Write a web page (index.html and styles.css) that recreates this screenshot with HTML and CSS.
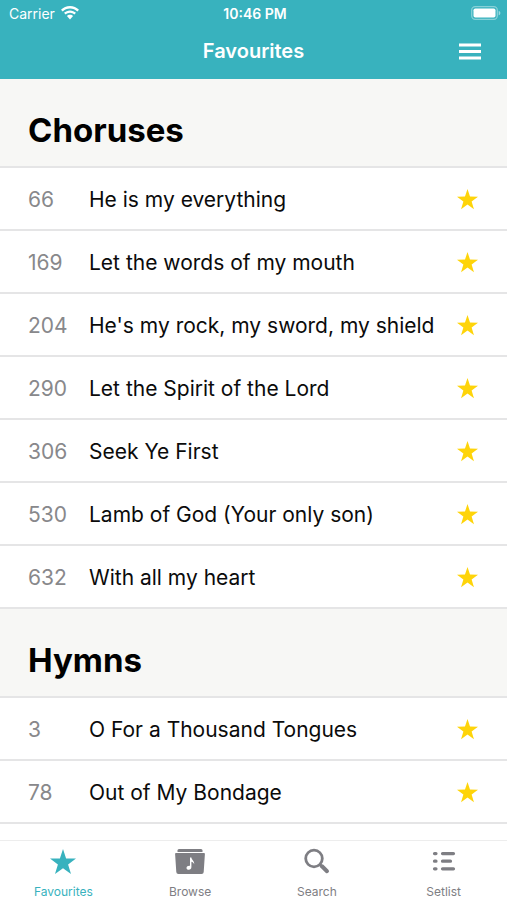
FILE: index.html
```html
<!DOCTYPE html>
<html lang="en">
<head>
<meta charset="utf-8">
<meta name="viewport" content="width=device-width, initial-scale=1">
<title>Favourites</title>
<link rel="stylesheet" href="styles.css">
</head>
<body>
<svg class="sprite" aria-hidden="true">
  <symbol id="star" viewBox="0 0 26 26">
    <path d="M13 0 16.1 9.4 26 9.5 18.1 15.4 21 25 13 19.3 5 25 7.9 15.4 0 9.5 9.9 9.4Z" fill="currentColor"/>
  </symbol>
</svg>
<div class="app">
  <header class="top">
    <div class="status">
      <div class="carrier">
        <span>Carrier</span>
        <svg class="wifi" viewBox="0 0 18 14" aria-hidden="true">
          <path d="M9 0C5.500 0 2.300 1.400 0 3.700L1.700 5.400C3.600 3.500 6.100 2.500 9 2.500S14.400 3.500 16.300 5.400L18 3.700C15.700 1.400 12.500 0 9 0Z"/>
          <path d="M9 4.400C6.700 4.400 4.600 5.300 3 6.800L4.700 8.500C5.800 7.400 7.300 6.700 9 6.700S12.200 7.400 13.300 8.500L15 6.800C13.400 5.300 11.300 4.400 9 4.400Z"/>
          <path d="M9 8.800C7.700 8.800 6.700 9.300 5.900 10L9 13.500 12.100 10C11.300 9.300 10.300 8.800 9 8.800Z"/>
        </svg>
      </div>
      <time class="clock">10:46 PM</time>
      <svg class="battery" viewBox="0 0 30 14" aria-hidden="true">
        <rect x=".7" y=".7" width="25.600" height="12.600" rx="3.500" fill="none" stroke="#fff" stroke-opacity=".4" stroke-width="1.300"/>
        <rect x="2.500" y="2.500" width="22" height="9" rx="1.800" fill="#fff"/>
        <path d="M27.700 4.700C29.900 5.600 29.900 8.400 27.700 9.300Z" fill="#fff" fill-opacity=".5"/>
      </svg>
    </div>
    <div class="nav">
      <h1 class="title">Favourites</h1>
      <button class="menu" type="button" aria-label="Menu">
        <svg viewBox="0 0 22 17" aria-hidden="true"><path d="M0 .5H22V3.500H0ZM0 7H22V10H0ZM0 13.500H22V16.500H0Z"/></svg>
      </button>
    </div>
  </header>
  <main class="content">
    <section>
      <h2 class="heading">Choruses</h2>
      <ul class="list">
        <li class="row"><span class="number">66</span><span class="name">He is my everything</span><button class="fav" type="button" aria-label="Remove favourite"><svg><use href="#star"/></svg></button></li>
        <li class="row"><span class="number">169</span><span class="name">Let the words of my mouth</span><button class="fav" type="button" aria-label="Remove favourite"><svg><use href="#star"/></svg></button></li>
        <li class="row"><span class="number">204</span><span class="name">He's my rock, my sword, my shield</span><button class="fav" type="button" aria-label="Remove favourite"><svg><use href="#star"/></svg></button></li>
        <li class="row"><span class="number">290</span><span class="name">Let the Spirit of the Lord</span><button class="fav" type="button" aria-label="Remove favourite"><svg><use href="#star"/></svg></button></li>
        <li class="row"><span class="number">306</span><span class="name">Seek Ye First</span><button class="fav" type="button" aria-label="Remove favourite"><svg><use href="#star"/></svg></button></li>
        <li class="row"><span class="number">530</span><span class="name">Lamb of God (Your only son)</span><button class="fav" type="button" aria-label="Remove favourite"><svg><use href="#star"/></svg></button></li>
        <li class="row"><span class="number">632</span><span class="name">With all my heart</span><button class="fav" type="button" aria-label="Remove favourite"><svg><use href="#star"/></svg></button></li>
      </ul>
    </section>
    <section>
      <h2 class="heading">Hymns</h2>
      <ul class="list">
        <li class="row"><span class="number">3</span><span class="name">O For a Thousand Tongues</span><button class="fav" type="button" aria-label="Remove favourite"><svg><use href="#star"/></svg></button></li>
        <li class="row"><span class="number">78</span><span class="name">Out of My Bondage</span><button class="fav" type="button" aria-label="Remove favourite"><svg><use href="#star"/></svg></button></li>
      </ul>
    </section>
  </main>
  <nav class="tabs">
    <a class="tab active" href="#favourites" aria-current="page">
      <svg class="icon" viewBox="0 0 32 28" aria-hidden="true"><use href="#star" x="3" y="1" width="26" height="26"/></svg>
      Favourites
    </a>
    <a class="tab" href="#browse">
      <svg class="icon" viewBox="0 0 32 28" aria-hidden="true">
        <path d="M3.500 4V2.500Q3.500 1 5 1H27Q28.500 1 28.500 2.500V4Z"/>
        <path d="M2 5H30Q31 5 30.900 6L29.700 24Q29.600 26 27.600 26H4.400Q2.400 26 2.300 24L1.100 6Q1 5 2 5Z"/>
        <path class="note" d="M16 9.500H17.400C17.500 12 20.500 12.600 20.200 16.200 19.600 14.600 18.600 14.100 17.400 13.800V19C17.400 20.800 16.300 21.800 14.800 21.800 13.400 21.800 12.500 21 12.500 19.900 12.500 18.200 14.200 17.500 16 17.700Z"/>
      </svg>
      Browse
    </a>
    <a class="tab" href="#search">
      <svg class="icon" viewBox="0 0 32 28" aria-hidden="true">
        <circle cx="13" cy="10.500" r="8.300" fill="none" stroke="currentColor" stroke-width="2.800"/>
        <path d="M18.800 16.500 21 18.700" fill="none" stroke="currentColor" stroke-width="3"/>
        <path d="M21 18.300 26 23.200" fill="none" stroke="currentColor" stroke-width="4" stroke-linecap="round"/>
      </svg>
      Search
    </a>
    <a class="tab" href="#setlist">
      <svg class="icon" viewBox="0 0 32 28" aria-hidden="true">
        <path d="M6.500 5.600H8M6.500 13.200H8M6.500 20.800H8M14.500 5.600H25.500M14.500 13.200H22.500M14.500 20.800H25.500" fill="none" stroke="currentColor" stroke-width="3.200" stroke-linecap="round"/>
      </svg>
      Setlist
    </a>
  </nav>
</div>
</body>
</html>
```
FILE: styles.css
```css
* {
  box-sizing: border-box;
}

body {
  margin: 0;
  background: #fff;
  color: #0b0b0b;
  font-family: Inter, "Liberation Sans", sans-serif;
}

button {
  display: flex;
  padding: 0;
  border: 0;
  background: none;
}

.sprite {
  display: none;
}

.app {
  display: flex;
  flex-direction: column;
  height: 100vh;
}

.top {
  flex: none;
  background: #38b2be;
  color: #fff;
}

.status {
  display: grid;
  grid-template-columns: 1fr auto 1fr;
  align-items: center;
  height: 26px;
  padding: 0 6px 0 9px;
}

.carrier {
  display: flex;
  align-items: center;
  gap: 6px;
  font-size: 14px;
}

.wifi {
  width: 18px;
  height: 14px;
  fill: #fff;
}

.clock {
  font-size: 14px;
  font-weight: 600;
}

.battery {
  justify-self: end;
  width: 30px;
  height: 14px;
}

.nav {
  display: grid;
  grid-template-columns: 1fr auto 1fr;
  align-items: center;
  height: 53px;
  padding: 0 26px 3px;
}

.title {
  grid-column: 2;
  margin: 0;
  font-size: 20px;
  font-weight: 600;
  line-height: 24px;
}

.menu {
  justify-self: end;
}

.menu svg {
  width: 22px;
  height: 17px;
  fill: #fff;
}

.content {
  flex: 1;
  min-height: 0;
  overflow: hidden;
}

.heading {
  margin: 0;
  padding: 31px 28px 16px;
  border-bottom: 2px solid #e5e5e6;
  background: #f7f7f5;
  color: #000;
  font-size: 33px;
  font-weight: 700;
  line-height: 40px;
}

.list {
  margin: 0;
  padding: 0;
  list-style: none;
}

.row {
  display: flex;
  align-items: center;
  height: 63px;
  padding: 2px 29px 0 28px;
  border-bottom: 2px solid #e5e5e6;
  font-size: 21px;
}

.number {
  flex: none;
  width: 61px;
  color: #88888b;
}

.name {
  flex: 1;
}

.fav {
  color: #fed40a;
}

.fav svg {
  width: 21px;
  height: 21px;
}

.tabs {
  display: grid;
  flex: none;
  grid-template-columns: repeat(4, 1fr);
  height: 60px;
  border-top: 1px solid #ededed;
  background: #fff;
}

.tab {
  display: flex;
  flex-direction: column;
  align-items: center;
  gap: 8px;
  padding-top: 7px;
  color: #7e7e83;
  font-size: 12px;
  line-height: 16px;
  text-decoration: none;
}

.active {
  color: #38b2be;
}

.icon {
  width: 32px;
  height: 28px;
  fill: currentColor;
}

.note {
  fill: #fff;
}
```
